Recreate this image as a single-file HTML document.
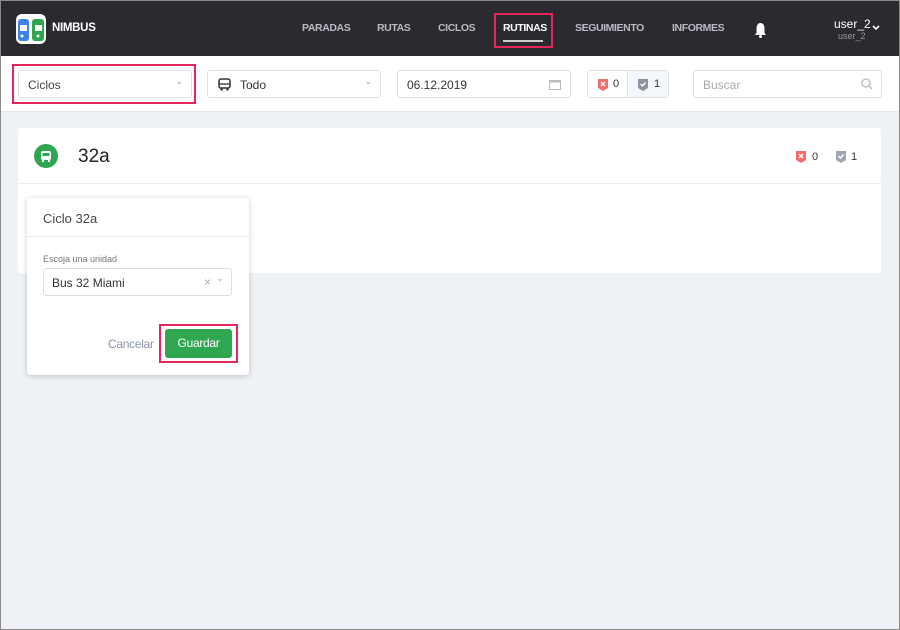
<!DOCTYPE html><html><head><meta charset="utf-8"><style>
*{box-sizing:border-box;margin:0;padding:0}
body{width:900px;height:630px;overflow:hidden;background:#eef1f5;font-family:"Liberation Sans",sans-serif;position:relative}
.a{position:absolute}
.nav{left:0;top:0;width:900px;height:56px;background:#2b2a30}
.nl{position:absolute;top:22px;font-size:10.5px;font-weight:bold;color:#b9bac2;letter-spacing:-.4px}
.tb{left:0;top:56px;width:900px;height:56px;background:#fff;border-bottom:1px solid #e4e6ea}
.in{position:absolute;height:28px;border:1px solid #dcdfe4;border-radius:3px;background:#fff;font-size:12px;color:#333;padding:7px 9px}
.red{position:absolute;border:2px solid #e5265a}
</style></head><body>
<div class="a nav">
 <svg class="a" style="left:16px;top:14px" width="30" height="30" viewBox="0 0 30 30"><rect width="30" height="30" rx="6" fill="#fff"/><rect x="2" y="5" width="11" height="22" rx="3" fill="#3d83e8"/><rect x="16" y="5" width="12" height="22" rx="3" fill="#2fa64f"/><rect x="4" y="11" width="7" height="6" fill="#fff"/><rect x="19" y="11" width="7" height="6" fill="#fff"/><circle cx="6" cy="22" r="1.5" fill="#fff"/><circle cx="22" cy="22" r="1.5" fill="#fff"/></svg>
 <div class="a" style="left:52px;top:22px;color:#fff;font-weight:bold;font-size:11.5px;letter-spacing:-.3px">NIMBUS</div>
 <div class="nl" style="left:302px">PARADAS</div>
 <div class="nl" style="left:377px">RUTAS</div>
 <div class="nl" style="left:438px">CICLOS</div>
 <div class="nl" style="left:503px;color:#fff">RUTINAS</div>
 <div class="a" style="left:503px;top:40px;width:40px;height:2px;background:#ccc"></div>
 <div class="red" style="left:494px;top:13px;width:59px;height:35px"></div>
 <div class="nl" style="left:575px">SEGUIMIENTO</div>
 <div class="nl" style="left:672px">INFORMES</div>
 <svg class="a" style="left:753px;top:22px" width="15" height="16" viewBox="0 0 15 16"><path d="M7.5 1C4.5 1 3.5 4 3.5 7v4L2 13h11l-1.5-2V7c0-3-1-6-4-6z" fill="#fff"/><circle cx="7.5" cy="14.5" r="1.5" fill="#fff"/></svg>
 <div class="a" style="left:834px;top:17px;color:#fff;font-size:12px">user_2</div>
 <div class="a" style="left:838px;top:31px;color:#999;font-size:9px">user_2</div>
 <svg class="a" style="left:872px;top:25px" width="8" height="6" viewBox="0 0 8 6"><path d="M1 1l3 3 3-3" stroke="#fff" stroke-width="1.6" fill="none"/></svg>
</div>
<div class="a tb">
 <div class="in" style="left:18px;top:14px;width:174px;color:#444">Ciclos<span style="position:absolute;right:8px;top:5px;color:#999;font-size:9px">⌄</span></div>
 <div class="red" style="left:12px;top:8px;width:184px;height:40px"></div>
 <div class="in" style="left:207px;top:14px;width:174px;padding-left:32px">Todo<span style="position:absolute;right:8px;top:5px;color:#999;font-size:9px">⌄</span>
  <svg style="position:absolute;left:10px;top:7px" width="13" height="13" viewBox="0 0 13 13"><rect x="1" y="1" width="11" height="9" rx="2" fill="none" stroke="#333" stroke-width="1.5"/><line x1="1" y1="6" x2="12" y2="6" stroke="#333" stroke-width="1.3"/><circle cx="3.5" cy="11.5" r="1.2" fill="#333"/><circle cx="9.5" cy="11.5" r="1.2" fill="#333"/></svg></div>
 <div class="in" style="left:397px;top:14px;width:174px">06.12.2019
  <svg style="position:absolute;right:9px;top:8px" width="12" height="11" viewBox="0 0 12 11"><rect x=".5" y="1.5" width="11" height="9" fill="none" stroke="#bbb"/><rect x=".5" y="1.5" width="11" height="2" fill="#bbb"/></svg></div>
 <div class="in" style="left:587px;top:14px;width:82px;padding:0">
  <div style="position:absolute;left:0;top:0;width:40px;height:26px;border-right:1px solid #e4e6ea"></div>
  <div style="position:absolute;left:41px;top:0;width:39px;height:26px;background:#f3f6fa"></div>
  <svg style="position:absolute;left:9px;top:7px" width="12" height="13" viewBox="0 0 12 13"><path d="M1 1h10v9l-5 3-5-3z" fill="#f26d6d"/><path d="M4 4l4 4M8 4l-4 4" stroke="#fff" stroke-width="1.4"/></svg>
  <span style="position:absolute;left:25px;top:7px;font-size:11px">0</span>
  <svg style="position:absolute;left:49px;top:7px" width="12" height="13" viewBox="0 0 12 13"><path d="M1 1h10v9l-5 3-5-3z" fill="#8e929c"/><path d="M3.5 6l2 2 3-3.5" stroke="#fff" stroke-width="1.4" fill="none"/></svg>
  <span style="position:absolute;left:66px;top:7px;font-size:11px">1</span></div>
 <div class="in" style="left:693px;top:14px;width:189px;color:#aaa">Buscar
  <svg style="position:absolute;right:8px;top:7px" width="12" height="12" viewBox="0 0 12 12"><circle cx="5" cy="5" r="4" fill="none" stroke="#bbb" stroke-width="1.3"/><line x1="8" y1="8" x2="11" y2="11" stroke="#bbb" stroke-width="1.3"/></svg></div>
</div>
<div class="a" style="left:18px;top:128px;width:863px;height:145px;background:#fff;border-radius:3px">
 <div style="position:absolute;left:0;top:55px;width:863px;height:1px;background:#e8eaee"></div>
 <svg style="position:absolute;left:16px;top:16px" width="24" height="24" viewBox="0 0 24 24"><circle cx="12" cy="12" r="12" fill="#2fa64f"/><rect x="7" y="7" width="10" height="9" rx="2" fill="#fff"/><rect x="8.5" y="9" width="7" height="3" fill="#2fa64f"/><rect x="8" y="16" width="2" height="2" fill="#fff"/><rect x="14" y="16" width="2" height="2" fill="#fff"/></svg>
 <div style="position:absolute;left:60px;top:18px;font-size:19px;color:#222">32a</div>
 <svg style="position:absolute;left:777px;top:22px" width="12" height="13" viewBox="0 0 12 13"><path d="M1 1h10v9l-5 3-5-3z" fill="#f26d6d"/><path d="M4 4l4 4M8 4l-4 4" stroke="#fff" stroke-width="1.4"/></svg>
 <span style="position:absolute;left:794px;top:23px;font-size:11px;color:#333">0</span>
 <svg style="position:absolute;left:817px;top:22px" width="12" height="13" viewBox="0 0 12 13"><path d="M1 1h10v9l-5 3-5-3z" fill="#a2a6ae"/><path d="M3.5 6l2 2 3-3.5" stroke="#fff" stroke-width="1.4" fill="none"/></svg>
 <span style="position:absolute;left:833px;top:23px;font-size:11px;color:#333">1</span>
</div>
<div class="a" style="left:27px;top:198px;width:222px;height:177px;background:#fff;border-radius:3px;box-shadow:0 1px 6px rgba(0,0,0,.2)">
 <div style="position:absolute;left:16px;top:13px;font-size:13px;color:#444">Ciclo 32a</div>
 <div style="position:absolute;left:0;top:38px;width:222px;height:1px;background:#e8eaee"></div>
 <div style="position:absolute;left:16px;top:56px;font-size:9px;color:#777">Escoja una unidad</div>
 <div style="position:absolute;left:16px;top:70px;width:189px;height:28px;border:1px solid #dcdfe4;border-radius:3px;font-size:12px;color:#333;padding:7px 8px">Bus 32 Miami<span style="position:absolute;right:20px;top:6px;color:#aaa">×</span><span style="position:absolute;right:7px;top:4px;color:#aaa;font-size:9px">⌄</span></div>
 <div style="position:absolute;left:81px;top:139px;font-size:12px;color:#8a94a8;letter-spacing:-.3px">Cancelar</div>
 <div style="position:absolute;left:138px;top:131px;width:67px;height:29px;background:#2fa64f;border-radius:3px;color:#fff;font-size:12px;text-align:center;line-height:29px;letter-spacing:-.3px">Guardar</div>
 <div class="red" style="left:132px;top:126px;width:79px;height:39px"></div>
</div>
<div class="a" style="left:0;top:0;width:900px;height:630px;border:1px solid #8a8a8a;pointer-events:none"></div>
</body></html>
